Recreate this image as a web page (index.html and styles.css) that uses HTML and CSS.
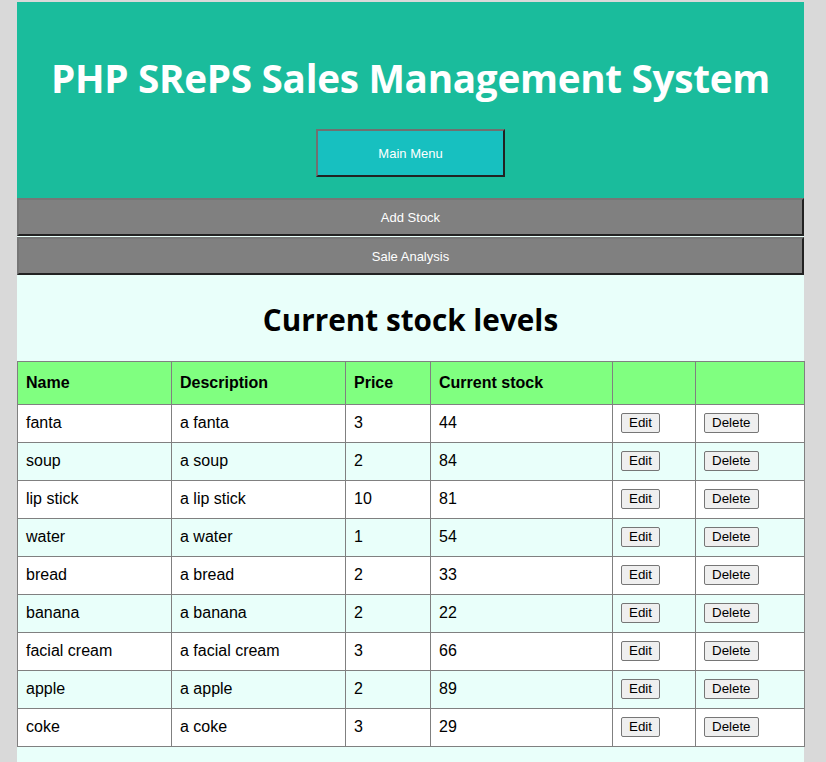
FILE: index.html
```html
<!DOCTYPE html>
<html>
<head>
<meta charset="utf-8">
<title>PHP SRePS</title>
<link rel="stylesheet" href="styles.css">
</head>
<body>
<div class="page">
  <header class="header">
    <h1 class="title">PHP SRePS Sales Management System</h1>
    <button class="main-btn">Main Menu</button>
  </header>
  <nav class="nav">
    <button class="nav-btn">Add Stock</button>
    <button class="nav-btn">Sale Analysis</button>
  </nav>
  <main class="content">
    <h2 class="heading">Current stock levels</h2>
    <table class="stock">
      <colgroup>
        <col class="c-name"><col class="c-desc"><col class="c-price"><col class="c-stock"><col class="c-edit"><col class="c-del">
      </colgroup>
      <thead>
        <tr><th>Name</th><th>Description</th><th>Price</th><th>Current stock</th><th></th><th></th></tr>
      </thead>
      <tbody>
        <tr><td>fanta</td><td>a fanta</td><td>3</td><td>44</td><td><button class="act">Edit</button></td><td><button class="act">Delete</button></td></tr>
        <tr><td>soup</td><td>a soup</td><td>2</td><td>84</td><td><button class="act">Edit</button></td><td><button class="act">Delete</button></td></tr>
        <tr><td>lip stick</td><td>a lip stick</td><td>10</td><td>81</td><td><button class="act">Edit</button></td><td><button class="act">Delete</button></td></tr>
        <tr><td>water</td><td>a water</td><td>1</td><td>54</td><td><button class="act">Edit</button></td><td><button class="act">Delete</button></td></tr>
        <tr><td>bread</td><td>a bread</td><td>2</td><td>33</td><td><button class="act">Edit</button></td><td><button class="act">Delete</button></td></tr>
        <tr><td>banana</td><td>a banana</td><td>2</td><td>22</td><td><button class="act">Edit</button></td><td><button class="act">Delete</button></td></tr>
        <tr><td>facial cream</td><td>a facial cream</td><td>3</td><td>66</td><td><button class="act">Edit</button></td><td><button class="act">Delete</button></td></tr>
        <tr><td>apple</td><td>a apple</td><td>2</td><td>89</td><td><button class="act">Edit</button></td><td><button class="act">Delete</button></td></tr>
        <tr><td>coke</td><td>a coke</td><td>3</td><td>29</td><td><button class="act">Edit</button></td><td><button class="act">Delete</button></td></tr>
      </tbody>
    </table>
  </main>
</div>
</body>
</html>
```
FILE: styles.css
```css
html, body {
  margin: 0;
  padding: 0;
  background: #d9d9d9;
}
body {
  font-family: "Liberation Sans", Arial, sans-serif;
}
.page {
  width: 787px;
  margin: 2px 0 0 17px;
  background: #e9fffa;
  min-height: 760px;
}
.header {
  background: #1abc9c;
  height: 196px;
  box-sizing: border-box;
  padding-top: 52px;
  display: flex;
  flex-direction: column;
  align-items: center;
}
.title {
  margin: 0;
  font-family: "Open Sans", "Noto Sans", sans-serif;
  font-weight: 700;
  font-size: 38.7px;
  line-height: 48px;
  color: #ffffff;
  letter-spacing: -0.3px;
}
.main-btn {
  margin-top: 27px;
  width: 189px;
  height: 48px;
  background: #17c0c0;
  color: #ffffff;
  font-family: "Liberation Sans", Arial, sans-serif;
  font-size: 13px;
  border: 2px solid;
  border-color: #707070 #222222 #222222 #707070;
  padding: 0;
}
.nav {
  display: flex;
  flex-direction: column;
  gap: 1px;
}
.nav-btn {
  display: block;
  width: 100%;
  height: 38px;
  background: #808080;
  color: #ffffff;
  font-family: "Liberation Sans", Arial, sans-serif;
  font-size: 13px;
  border: 2px solid;
  border-color: #767676 #222222 #222222 #767676;
  padding: 0;
}
.content {
  padding-bottom: 14px;
}
.heading {
  margin: 0;
  padding: 26px 0 22px;
  text-align: center;
  font-family: "Open Sans", "Noto Sans", sans-serif;
  font-weight: 700;
  font-size: 29.7px;
  line-height: 38px;
  color: #000000;
}
.stock {
  width: 787px;
  border-collapse: collapse;
  table-layout: fixed;
  font-size: 16px;
}
.c-name { width: 154px; }
.c-desc { width: 174px; }
.c-price { width: 85px; }
.c-stock { width: 182px; }
.c-edit { width: 83px; }
.c-del { width: 109px; }
.stock th, .stock td {
  border: 1px solid #808080;
  text-align: left;
  padding: 0 8px;
  color: #000;
}
.stock th {
  height: 42px;
  background: #80ff80;
  font-weight: 700;
}
.stock td {
  height: 35px;
  padding-bottom: 2px;
}
.stock tbody tr:nth-child(odd) td { background: #ffffff; }
.stock tbody tr:nth-child(even) td { background: #e9fffa; }
.act {
  font-family: "Liberation Sans", Arial, sans-serif;
  font-size: 13.33px;
  background: #efefef;
  border: 1px solid #767676;
  border-radius: 2px;
  padding: 1px 7px;
  color: #000;
  height: 20px;
  line-height: 16px;
}
```
